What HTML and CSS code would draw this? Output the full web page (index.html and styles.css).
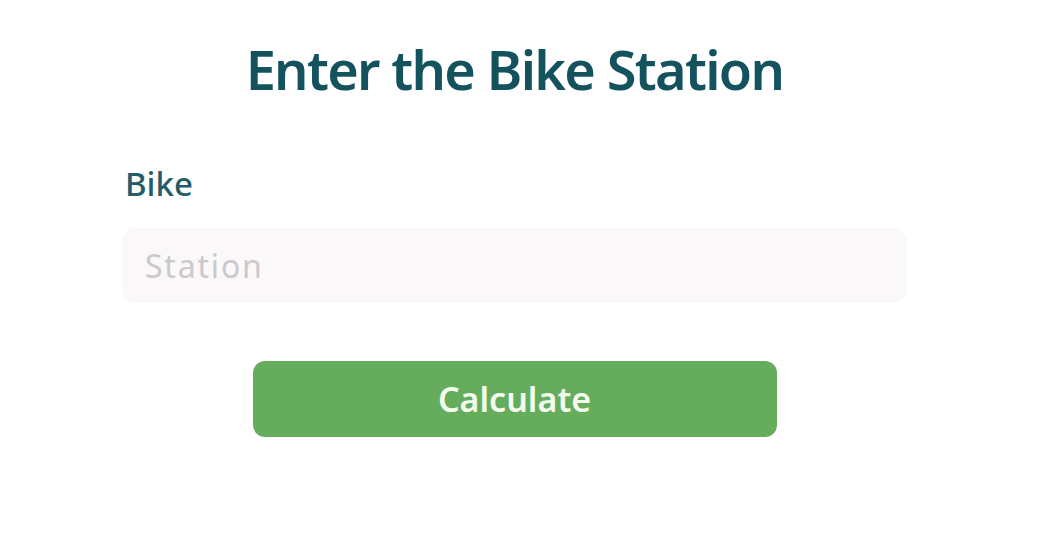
FILE: index.html
```html
<!DOCTYPE html>
<html lang="en">
<head>
<meta charset="utf-8">
<title>Enter the Bike Station</title>
<link rel="stylesheet" href="styles.css">
</head>
<body>
<main class="form">
  <h1 class="title">Enter the Bike Station</h1>
  <label class="label" for="station">Bike</label>
  <input class="input" id="station" type="text" placeholder="Station">
  <button class="button" type="button">Calculate</button>
</main>
</body>
</html>
```
FILE: styles.css
```css
html, body {
  margin: 0;
  padding: 0;
  background: #ffffff;
}
body {
  font-family: "Noto Sans", "Open Sans", sans-serif;
}
.form {
  width: 785px;
  margin-left: 122px;
  display: flex;
  flex-direction: column;
  align-items: stretch;
}
.title {
  margin: 34px 0 0;
  text-align: center;
  font-size: 54px;
  font-weight: 600;
  line-height: 70px;
  color: #14535e;
  letter-spacing: -1.65px;
}
.label {
  margin: 58px 0 0 3px;
  font-size: 33px;
  line-height: 44px;
  color: #245d69;
  font-weight: 500;
}
.input {
  margin-top: 22px;
  height: 75px;
  box-sizing: border-box;
  border: none;
  border-radius: 14px;
  background: #faf8f8;
  padding: 0 23px;
  font-family: inherit;
  font-size: 32px;
  letter-spacing: 1.8px;
  color: #333;
  outline: none;
}
.input::placeholder {
  color: #cbc9c9;
}
.button {
  align-self: center;
  margin-top: 58px;
  width: 524px;
  height: 76px;
  border: none;
  border-radius: 12px;
  background: #65ad5d;
  color: #f3fbee;
  font-family: inherit;
  font-size: 34px;
  font-weight: 600;
  cursor: pointer;
}
```
